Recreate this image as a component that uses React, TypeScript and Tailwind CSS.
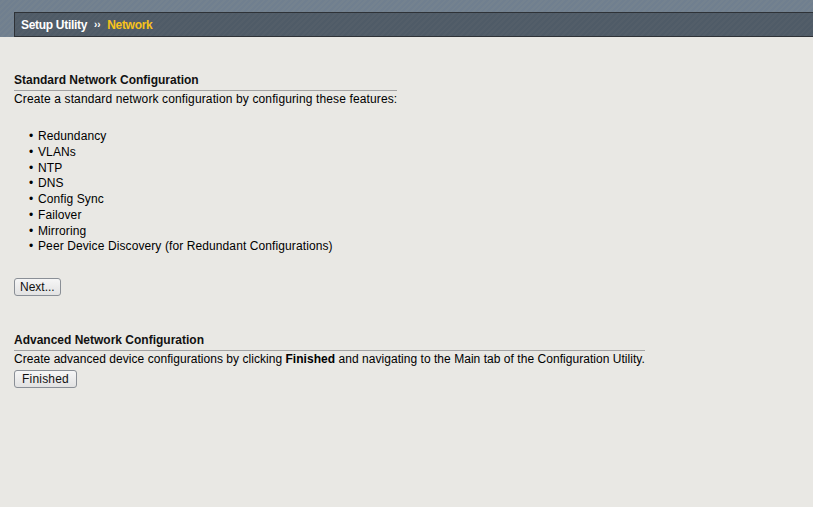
import { FC } from "react";

const features = [
    "Redundancy",
    "VLANs",
    "NTP",
    "DNS",
    "Config Sync",
    "Failover",
    "Mirroring",
    "Peer Device Discovery (for Redundant Configurations)",
];

const Button: FC<{ label: string; wide?: boolean }> = ({ label, wide }) => (
    <button
        className={
            wide
                ? "h-[18px] px-[7px] border border-[#8a8f96] rounded-[3px] bg-[linear-gradient(#f6f6f6,#e2e2e2)] text-[12px] leading-[14px] tracking-[0.2px] text-[#111]"
                : "h-[18px] px-[5px] border border-[#8a8f96] rounded-[3px] bg-[linear-gradient(#f6f6f6,#e2e2e2)] text-[12px] leading-[14px] text-[#111]"
        }
    >
        {label}
    </button>
);

export default function App() {
    return (
        <div className="w-[813px] h-[507px] bg-[#e9e8e4] font-['Liberation_Sans',Arial,sans-serif] text-[12px] text-black overflow-hidden">
            <div className="h-[37px] pt-[12px] pl-[14px] bg-[repeating-linear-gradient(135deg,#707f8f_0px,#707f8f_2px,#74828f_2px,#74828f_4px)]">
                <div className="h-[25px] flex items-center pl-[6px] border-y border-l border-[#2e3237] bg-[repeating-linear-gradient(135deg,#4f5b67_0px,#4f5b67_2px,#535e69_2px,#535e69_4px)] font-bold text-[12px] tracking-[-0.3px]">
                    <span className="text-white">Setup Utility</span>
                    <span className="text-white ml-[7px] text-[10px]">››</span>
                    <span className="text-[#f7c31b] ml-[7px]">Network</span>
                </div>
            </div>

            <div className="px-[14px] pt-[35px]">
                <div className="w-fit">
                    <h3 className="font-bold leading-[16px] pb-[2px] border-b border-[#a3a3a3] text-[#111]">
                        Standard Network Configuration
                    </h3>
                    <p className="leading-[15px] pt-[1px] tracking-[0.13px]">
                        Create a standard network configuration by configuring these features:
                    </p>
                </div>

                <ul className="mt-[22px] pl-[15px] tracking-[0.1px]">
                    {features.map((f) => (
                        <li key={f} className="flex leading-[15.75px]">
                            <span className="w-[9px] text-[12px]">•</span>
                            <span>{f}</span>
                        </li>
                    ))}
                </ul>

                <div className="mt-[23px]">
                    <Button label="Next..." />
                </div>

                <div className="w-fit mt-[36px]">
                    <h3 className="font-bold leading-[16px] pb-[2px] border-b border-[#a3a3a3] text-[#111]">
                        Advanced Network Configuration
                    </h3>
                    <p className="leading-[15px] pt-[1px] tracking-[0.04px]">
                        Create advanced device configurations by clicking <b>Finished</b> and navigating to the Main tab of the Configuration Utility.
                    </p>
                </div>
                <div className="mt-[3px]">
                    <Button label="Finished" wide />
                </div>
            </div>
        </div>
    );
}
